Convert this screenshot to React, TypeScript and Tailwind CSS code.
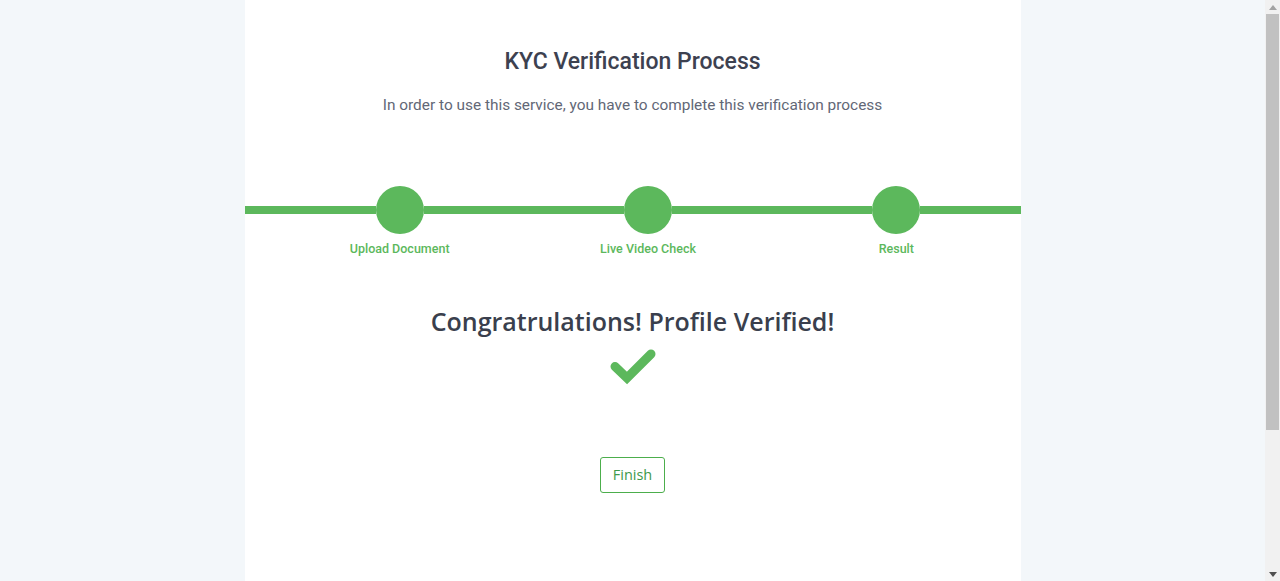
const steps = ["Upload Document", "Live Video Check", "Result"];

function CheckIcon() {
  return (
    <svg width="46" height="38" viewBox="0 0 46 38" fill="none">
      <path
        d="M5 19.5 L17 31 L41 7"
        stroke="#5cb85c"
        strokeWidth="9"
        strokeLinecap="round"
        strokeLinejoin="miter"
      />
    </svg>
  );
}

function Scrollbar() {
  return (
    <div className="flex w-[15px] shrink-0 flex-col bg-[#f1f1f1]">
      <div className="flex h-[14px] items-center justify-center">
        <svg width="8" height="5" viewBox="0 0 8 5">
          <path d="M0 5 L4 0 L8 5 Z" fill="#a3a3a3" />
        </svg>
      </div>
      <div className="mx-[1px] h-[416px] bg-[#c1c1c1]" />
      <div className="flex-1" />
      <div className="flex h-[14px] items-center justify-center">
        <svg width="8" height="5" viewBox="0 0 8 5">
          <path d="M0 0 L8 0 L4 5 Z" fill="#505050" />
        </svg>
      </div>
    </div>
  );
}

export default function App() {
  return (
    <div className="flex h-[581px] overflow-hidden bg-[#f3f7fa]">
      <main className="flex-1">
        <div className="mx-auto h-full w-[776px] bg-white pt-[46px]">
          {/* Header */}
          <div className="text-center font-['Roboto',sans-serif]">
            <h1 className="text-[23px] leading-[32px] font-medium text-[#3d4150]">
              KYC Verification Process
            </h1>
            <p className="mt-[15px] text-[15.4px] leading-[24px] text-[#626776]">
              In order to use this service, you have to complete this verification process
            </p>
          </div>

          {/* Stepper */}
          <div className="mt-[69px] flex font-['Roboto',sans-serif]">
            <div className="w-[31px] shrink-0 pt-[20px]">
              <div className="h-[8px] bg-[#5cb85c]" />
            </div>
            {steps.map((s) => (
              <div key={s} className="flex-1 flex flex-col items-center">
                <div className="flex w-full items-center">
                  <div className="h-[8px] flex-1 bg-[#5cb85c]" />
                  <div className="h-[48px] w-[48px] rounded-full bg-[#5cb85c]" />
                  <div className="h-[8px] flex-1 bg-[#5cb85c]" />
                </div>
                <span className="mt-[6px] text-[12.5px] leading-[18px] font-medium text-[#5cb85c]">
                  {s}
                </span>
              </div>
            ))}
          </div>

          {/* Result */}
          <div className="mt-[45px] flex flex-col items-center font-['Open_Sans',sans-serif]">
            <h2 className="text-[25px] leading-[36px] font-semibold text-[#3a3f4d]">
              Congratrulations! Profile Verified!
            </h2>
            <div className="mt-[8px]">
              <CheckIcon />
            </div>
            <button className="mt-[72px] h-[36px] rounded-[3px] border border-[#4cae4c] px-[12px] text-[14.5px] text-[#3d9a4c]">
              Finish
            </button>
          </div>
        </div>
      </main>
      <Scrollbar />
    </div>
  );
}
